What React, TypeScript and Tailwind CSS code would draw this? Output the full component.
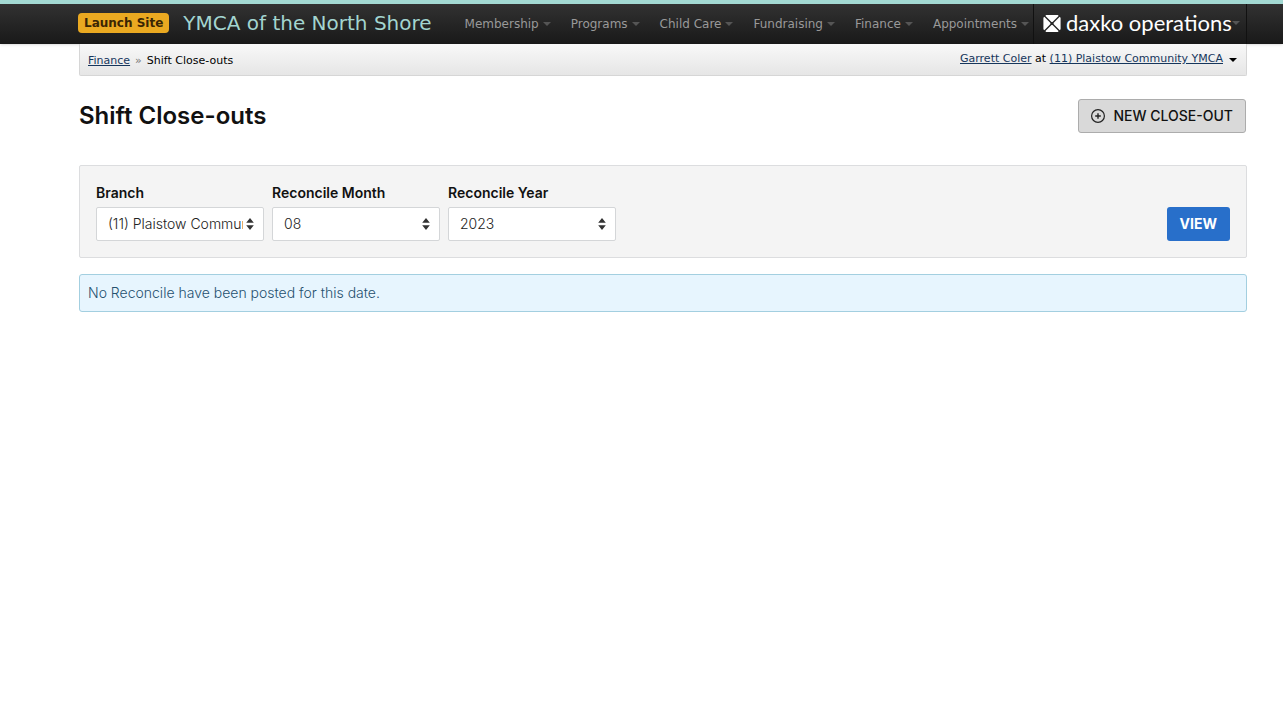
import { useState } from 'react';

const menus = ['Membership', 'Programs', 'Child Care', 'Fundraising', 'Finance', 'Appointments'];

const months = ['01', '02', '03', '04', '05', '06', '07', '08', '09', '10', '11', '12'];

function Caret({ className }: { className: string }) {
  return (
    <svg viewBox="0 0 8 4" className={`w-2 h-1 shrink-0 ${className}`} fill="currentColor" aria-hidden="true">
      <path d="M0 0h8L4 4z" />
    </svg>
  );
}

function DaxkoMark() {
  return (
    <svg viewBox="0 0 18 17" className="w-[18px] h-[17px] shrink-0" aria-hidden="true">
      <path d="M3.2 0h11.6L17.6 2.8v11.4L14.8 17H3.2L.4 14.2V2.8z" fill="#fff" />
      <path d="M1 .5l8 8 8-8M1 16.5l8-8 8 8" fill="none" stroke="#262626" strokeWidth="1.4" />
      <circle cx="9" cy="8.5" r="1.5" fill="#262626" />
    </svg>
  );
}

interface SelectFieldProps {
  id: string;
  label: string;
  value: string;
  options: string[];
  onChange: (value: string) => void;
}

function SelectField({ id, label, value, options, onChange }: SelectFieldProps) {
  return (
    <div className="w-42">
      <label htmlFor={id} className="block text-sm leading-5 font-semibold text-[#111] mb-1">
        {label}
      </label>
      <div className="relative">
        <select
          id={id}
          value={value}
          onChange={(e) => onChange(e.target.value)}
          className="appearance-none w-full h-[34px] pl-[11px] pr-5 bg-white border border-[#d4d6d8] rounded-xs text-sm font-light text-[#222]"
        >
          {options.map((option) => (
            <option key={option}>{option}</option>
          ))}
        </select>
        <svg
          viewBox="0 0 8 12"
          className="absolute right-[10px] top-[11px] w-2 h-3 pointer-events-none"
          fill="#333"
          aria-hidden="true"
        >
          <path d="M4 0l3.8 4.8H.2zM4 12L.2 7.2h7.6z" />
        </svg>
      </div>
    </div>
  );
}

function Header() {
  return (
    <header className="border-t-4 border-[#a3d9d3] bg-gradient-to-b from-[#323232] to-[#191919] pl-[78px] pr-9 shadow-sm font-['DejaVu_Sans',sans-serif]">
      <div className="h-10 flex items-center whitespace-nowrap">
        <button className="h-5 px-1.5 mb-0.5 rounded-sm bg-[#eaa921] text-xs font-bold text-[#3a2504]">
          Launch Site
        </button>
        <a href="#" className="ml-3.5 mb-0.5 text-xl text-[#a3d5d0]">
          YMCA of the North Shore
        </a>
        <nav className="ml-auto mr-1 flex items-center gap-5">
          {menus.map((menu) => (
            <button key={menu} className="flex items-center gap-1 text-xs text-[#999]">
              {menu}
              <Caret className="text-[#555]" />
            </button>
          ))}
        </nav>
        <button className="h-full w-[214px] pb-0.5 pl-[9px] pr-[7px] flex items-center border-x border-[#111] text-white">
          <DaxkoMark />
          <span className="ml-[5px] mr-auto font-['Lato',sans-serif] text-[22px] leading-6">daxko operations</span>
          <Caret className="text-[#555]" />
        </button>
      </div>
    </header>
  );
}

function Breadcrumbs() {
  return (
    <div className="h-8 pt-1 pl-2 pr-[9px] flex items-center justify-between border border-t-0 border-[#d6d6d6] rounded-b-xs bg-gradient-to-b from-[#f8f8f8] to-[#e6e6e6] font-['DejaVu_Sans',sans-serif] text-[11px] text-black">
      <div className="flex gap-[5px]">
        <a href="#" className="text-[#16365c] underline">Finance</a>
        <span className="text-[#777]">»</span>
        <span>Shift Close-outs</span>
      </div>
      <div className="flex items-center gap-1.5 pb-1">
        <span>
          <a href="#" className="text-[#16365c] underline">Garrett Coler</a> at{' '}
          <a href="#" className="text-[#16365c] underline">(11) Plaistow Community YMCA</a>
        </span>
        <Caret className="text-black" />
      </div>
    </div>
  );
}

export default function App() {
  const [branch, setBranch] = useState('(11) Plaistow Community YMCA');
  const [month, setMonth] = useState('08');
  const [year, setYear] = useState('2023');

  return (
    <div className="min-h-screen bg-white font-['Inter',sans-serif] text-[#111]">
      <Header />

      <main className="pl-[79px] pr-9">
        <Breadcrumbs />

        <div className="mt-[23px] flex items-center justify-between pr-px">
          <h1 className="text-2xl font-semibold">Shift Close-outs</h1>
          <button className="h-[34px] pl-[11px] pr-3 flex items-center gap-[7px] border border-[#acacac] rounded-[3px] bg-[#d9d9d9] text-sm font-medium">
            <svg viewBox="0 0 16 16" className="w-4 h-4" fill="none" stroke="#222" aria-hidden="true">
              <circle cx="8" cy="8" r="6.4" strokeWidth="1.2" />
              <path d="M8 5.2v5.6M5.2 8h5.6" strokeWidth="1.4" />
            </svg>
            NEW CLOSE-OUT
          </button>
        </div>

        {/* Filters */}
        <form
          onSubmit={(e) => e.preventDefault()}
          className="mt-8 px-4 pt-[17px] pb-4 flex items-end justify-between border border-[#dcdddf] rounded-xs bg-[#f4f4f4]"
        >
          <div className="flex gap-2">
            <SelectField
              id="branch"
              label="Branch"
              value={branch}
              options={['(11) Plaistow Community YMCA']}
              onChange={setBranch}
            />
            <SelectField id="month" label="Reconcile Month" value={month} options={months} onChange={setMonth} />
            <SelectField
              id="year"
              label="Reconcile Year"
              value={year}
              options={['2021', '2022', '2023']}
              onChange={setYear}
            />
          </div>
          <button type="submit" className="h-[34px] px-[13px] rounded-[3px] bg-[#286fca] text-sm font-bold text-white">
            VIEW
          </button>
        </form>

        <div
          role="status"
          className="mt-4 px-2 py-2 border border-[#a3cfe0] rounded-[3px] bg-[#e7f5fe] text-sm font-light text-[#25506e]"
        >
          No Reconcile have been posted for this date.
        </div>
      </main>
    </div>
  );
}
